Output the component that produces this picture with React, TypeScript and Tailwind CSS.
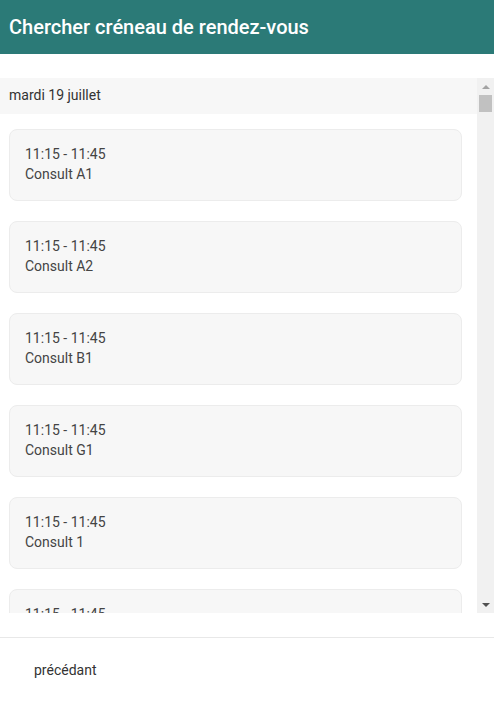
const rooms = ["Consult A1", "Consult A2", "Consult B1", "Consult G1", "Consult 1", "Consult 2"];

const SlotCard = ({ time, room }: { time: string; room: string }) => {
  return (
    <div className="shrink-0 rounded-lg border border-[#ececec] bg-[#f7f7f7] px-[15px] pt-[14px] pb-[16px] text-sm leading-5 text-[#444]">
      <div>{time}</div>
      <div>{room}</div>
    </div>
  );
};

// classic scrollbar look, the list is scrolled to the top
const ScrollBar = () => {
  return (
    <div className="flex w-[17px] shrink-0 flex-col items-center bg-[#f1f1f1]">
      <div className="flex h-[17px] w-full items-center justify-center">
        <div className="h-0 w-0 border-x-[4px] border-b-[4px] border-x-transparent border-b-[#a3a3a3]" />
      </div>
      <div className="h-[17px] w-[13px] bg-[#c1c1c1]" />
      <div className="flex-1" />
      <div className="flex h-[17px] w-full items-center justify-center">
        <div className="h-0 w-0 border-x-[4px] border-t-[4px] border-x-transparent border-t-[#505050]" />
      </div>
    </div>
  );
};

const App = () => {
  return (
    <div
      className="flex h-[701px] w-full flex-col bg-white"
      style={{ fontFamily: "Roboto, 'Liberation Sans', sans-serif" }}
    >
      <div className="flex h-[54px] shrink-0 items-center bg-[#2b7a77] px-[9px]">
        <h1 className="text-[20px] font-medium text-white">Chercher créneau de rendez-vous</h1>
      </div>

      <div className="mt-6 flex h-[535px] shrink-0">
        <div className="flex min-w-0 flex-1 flex-col overflow-hidden">
          <div className="flex h-9 shrink-0 items-center bg-[#f7f7f7] px-[9px] pb-[2px] text-sm text-[#333]">
            mardi 19 juillet
          </div>
          <div className="flex flex-col gap-5 pt-[15px] pl-[9px] pr-[15px]">
            {rooms.map((r) => (
              <SlotCard key={r} time="11:15 - 11:45" room={r} />
            ))}
          </div>
        </div>
        <ScrollBar />
      </div>

      <div className="mt-6 flex flex-1 items-center border-t border-[#e8e8e8] px-[34px]">
        <button className="text-sm text-[#333]">précédant</button>
      </div>
    </div>
  );
};

export default App;
